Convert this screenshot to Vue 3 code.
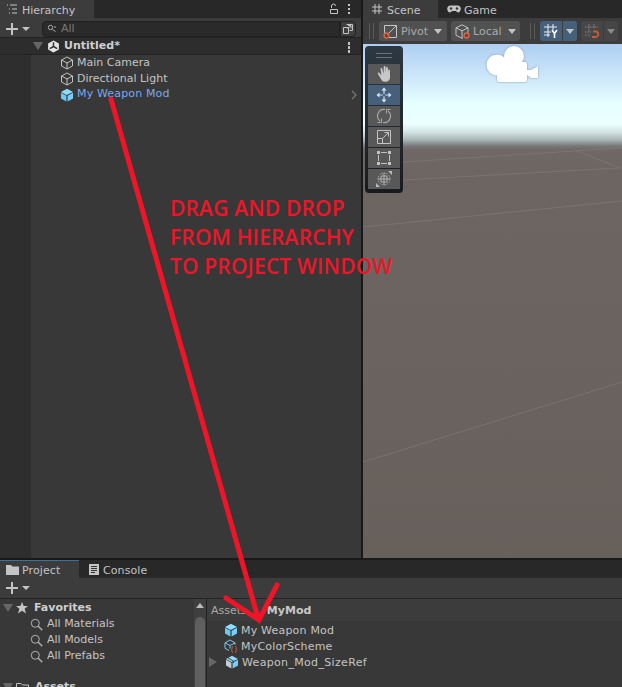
<script setup>
const tools = ['hand', 'move', 'rotate', 'scale', 'rect', 'all']
const hierarchy = [
  { label: 'Main Camera', kind: 'outline' },
  { label: 'Directional Light', kind: 'outline' },
  { label: 'My Weapon Mod', kind: 'prefab', active: true }
]
const favorites = ['All Materials', 'All Models', 'All Prefabs']
</script>

<template>
  <div class="app">
    <section class="hier">
      <div class="tabs">
        <div class="tab tab-h">
          <svg width="12" height="12" viewBox="0 0 12 12" class="tabicon"><path d="M1 2h1M4 2h7M3 6h1M6 6h5M3 10h1M6 10h5" stroke="#c4c4c4" fill="none"/></svg>
          <span>Hierarchy</span>
        </div>
        <div class="tabend">
          <svg width="10" height="12" viewBox="0 0 10 12"><path d="M2.500 5V3a2 2 0 0 1 4 0M1.500 6.500h7v4h-7z" stroke="#c4c4c4" fill="none"/></svg>
          <span class="dots"><i></i><i></i><i></i></span>
        </div>
      </div>
      <div class="bar hbar">
        <svg width="12" height="12" viewBox="0 0 12 12"><path d="M6 0v12M0 6h12" stroke="#c4c4c4" stroke-width="2"/></svg>
        <span class="caret small"></span>
        <div class="search">
          <svg width="10" height="10" viewBox="0 0 10 10"><circle cx="3.500" cy="3.500" r="2.200" stroke="#aaa" fill="none"/><path d="M5.500 5.500l3 2M7 3h2" stroke="#aaa" fill="none"/></svg>
          <span>All</span>
        </div>
        <div class="searchbtn">
          <svg width="12" height="12" viewBox="0 0 12 12"><path d="M4.500 1.500h6v6h-3M1.500 4.500h5v6h-5zM6 2.500h3v3M8.500 3l-3 3" stroke="#c4c4c4" fill="none"/></svg>
        </div>
      </div>
      <div class="hbody">
        <div class="scene-row">
          <span class="tri down"></span>
          <svg width="13" height="13" viewBox="0 0 14 14" class="unity"><path d="M7 .5l5.800 3.300v6.400L7 13.500 1.200 10.200V3.800z" fill="#e6e6e6"/><path d="M7 7V2.500M7 7l-4 2.300M7 7l4 2.300" stroke="#333" stroke-width="1.600"/></svg>
          <b>Untitled*</b>
          <span class="dots right"><i></i><i></i><i></i></span>
        </div>
        <div v-for="r in hierarchy" :key="r.label" class="hrow" :class="{ active: r.active }">
          <svg v-if="r.kind === 'outline'" width="14" height="14" viewBox="0 0 14 14"><path d="M7 1l5.500 3v6L7 13l-5.500-3V4zM1.500 4L7 7l5.500-3M7 7v6" stroke="#c4c4c4" fill="none"/></svg>
          <svg v-else width="14" height="14" viewBox="0 0 14 14"><path d="M7 .8L1 4l5.500 3L13 4z" fill="#8fdcff"/><path d="M1 4.800l5.400 3V13.500L1 10.500z" fill="#6cc8f5"/><path d="M13 4.800l-5.400 3V13.500L13 10.500z" fill="#76cff8"/></svg>
          <span>{{ r.label }}</span>
          <svg v-if="r.active" class="chev" width="6" height="10" viewBox="0 0 6 10"><path d="M1 1l4 4-4 4" stroke="#777" stroke-width="1.300" fill="none"/></svg>
        </div>
      </div>
    </section>

    <section class="scene">
      <div class="tabs">
        <div class="tab tab-s">
          <svg width="10" height="10" viewBox="0 0 10 10"><path d="M3 0v10M7 0v10M0 3h10M0 7h10" stroke="#c4c4c4"/></svg>
          <span>Scene</span>
        </div>
        <div class="tab2">
          <svg width="14" height="9" viewBox="0 0 14 9"><path d="M3.500.5h7a3.200 3.200 0 0 1 3 4.500c-.5 2.500-2.500 3-3.500 2L9 6H5L4 7C3 8 1 7.500.5 5a3.200 3.200 0 0 1 3-4.500z" fill="#c4c4c4"/><circle cx="4" cy="3.500" r="1.200" fill="#333"/><circle cx="10" cy="3.500" r="1.200" fill="#333"/></svg>
          <span>Game</span>
        </div>
      </div>
      <div class="sbar">
        <span class="grip"></span>
        <div class="btn pivot">
          <svg width="15" height="15" viewBox="0 0 15 15"><path d="M1.500 9V1.500h12v12H6M4.500 10.500L13 2" stroke="#c4c4c4" fill="none"/><circle cx="3.500" cy="11.500" r="2.500" stroke="#e2653c" stroke-width="1.300" fill="none"/></svg>
          <span class="lbl">Pivot</span><span class="caret"></span>
        </div>
        <div class="btn local">
          <svg width="15" height="15" viewBox="0 0 15 15"><path d="M7 .8l6 3v5M8 13.800l-1 .5-6-3V3.800l6-3M1 3.800l6 3 6-3M7 6.800v7" stroke="#c4c4c4" fill="none"/><circle cx="11.500" cy="11.500" r="2.500" stroke="#e2653c" stroke-width="1.300" fill="none"/></svg>
          <span class="lbl">Local</span><span class="caret"></span>
        </div>
        <span class="grip g2"></span>
        <div class="seg blue first">
          <svg width="15" height="14" viewBox="0 0 15 14"><path d="M4 0v13M9 0v6M0 3h13M0 8h7M0 11h6" stroke="#eee"/><path d="M8 6l2.500 3.500L13 6M10.500 9.500V14" stroke="#fff" stroke-width="1.600" fill="none"/></svg>
        </div>
        <div class="seg blue second"><span class="caret"></span></div>
        <div class="seg grey first g3">
          <svg width="15" height="14" viewBox="0 0 15 14"><path d="M4 0v8M9 0v5M0 3h13M0 8h6M4 10v3M0 11h2" stroke="#888" stroke-dasharray="1.500 1"/><path d="M8 7.500h2.500a2 2 0 0 1 0 5.500H7" stroke="#c85a35" stroke-width="1.800" fill="none"/></svg>
        </div>
        <div class="seg grey second"><span class="caret dim"></span></div>
      </div>
      <div class="view">
        <svg class="grid" width="259" height="514" viewBox="0 0 259 514">
          <path d="M40 118L259 104M40 136L256 124M212 106L257 124M0 183L259 157M0 418L259 338" stroke="#7f7975" fill="none" opacity=".75"/>
        </svg>
        <svg class="cam" width="56" height="40" viewBox="0 0 56 40">
          <circle cx="29" cy="12" r="10" fill="#fff"/>
          <circle cx="12" cy="21" r="10.500" fill="#fff"/>
          <rect x="12" y="18" width="30" height="20" rx="2" fill="#fff"/>
          <path d="M42 26h4l7-4v12h-7l-4-3z" fill="#fff"/>
        </svg>
        <div class="tools">
          <div class="handle"><i></i><i></i></div>
          <div v-for="t in tools" :key="t" class="tool" :class="{ on: t === 'move' }">
            <svg width="16" height="16" viewBox="0 0 16 16">
              <path v-if="t === 'hand'" d="M2 8l3 5c.5 1.500 1.500 2.800 4 2.800 3.500 0 5-2 5-4.500V4.500a.9.900 0 0 0-1.800 0V8l-.4-6a.9.900 0 0 0-1.800 0V7.500L9.500.9a.9.900 0 0 0-1.800 0L7.600 8 6.200 2.500a.9.900 0 0 0-1.700.3L5.500 9.500 3.300 6.800C2.300 6 1.300 7 2 8z" fill="#c8c8c8"/>
              <template v-else-if="t === 'move'">
                <path d="M8 1.500v13M1.500 8h13" stroke="#d8e4ee" stroke-width="1.200"/>
                <path d="M8 .5l2.500 3h-5zM8 15.500l2.500-3h-5zM.5 8l3-2.500v5zM15.500 8l-3-2.500v5z" fill="#d8e4ee"/>
                <circle cx="8" cy="8" r="1.600" fill="#4a6b8f"/>
              </template>
              <template v-else-if="t === 'rotate'">
                <path d="M9 1.500A6.500 6.500 0 0 0 4 13M7 14.500A6.500 6.500 0 0 0 12 3" stroke="#a8a8a8" stroke-width="1.200" fill="none"/>
                <path d="M1.500 14.500H5.500V10.500M14.500 1.500H10.500V5.500" stroke="#a8a8a8" fill="none"/>
              </template>
              <template v-else-if="t === 'scale'">
                <path d="M1.500 1.500h13v13h-13zM1.500 9.500h5v5M7 9l5.500-5.500M8.500 3.500h4v4" stroke="#c4c4c4" fill="none"/>
              </template>
              <template v-else-if="t === 'rect'">
                <path d="M1 1h3v3H1zM12 1h3v3h-3zM1 12h3v3H1zM12 12h3v3h-3z" fill="#c4c4c4"/>
                <path d="M5 2.500h6M5 13.500h6M2.500 5v6M13.500 5v6" stroke="#c4c4c4"/>
              </template>
              <template v-else>
                <circle cx="8" cy="8" r="6" stroke="#aaa" stroke-dasharray="1.500 1" fill="none"/>
                <path d="M8 2v12M2 8h12M5 5h6v6H5z" stroke="#bbb" stroke-width=".9" fill="none"/>
                <path d="M12 0h4v4zM0 16v-4l4 4z" fill="#bbb"/>
              </template>
            </svg>
          </div>
        </div>
      </div>
    </section>

    <section class="proj">
      <div class="tabs ptabs">
        <div class="tab tab-p">
          <svg width="13" height="11" viewBox="0 0 13 11"><path d="M0 1h5l1.500 1.500H13V11H0z" fill="#c4c4c4"/></svg>
          <span>Project</span>
        </div>
        <div class="tab2 cons">
          <svg width="10" height="11" viewBox="0 0 10 11"><path d="M0 0h10v11H0z" fill="#c4c4c4"/><path d="M2 2.500h6M2 4.500h6M2 6.500h6M2 8.500h4" stroke="#333"/></svg>
          <span>Console</span>
        </div>
      </div>
      <div class="bar pbar">
        <svg width="12" height="12" viewBox="0 0 12 12"><path d="M6 0v12M0 6h12" stroke="#c4c4c4" stroke-width="2"/></svg>
        <span class="caret small"></span>
      </div>
      <div class="pbody">
        <aside class="side">
          <div class="tree">
            <div class="fav">
              <span class="tri down"></span>
              <svg width="12" height="12" viewBox="0 0 12 12"><path d="M6 0l1.700 4H12L8.600 6.800 10 11.500 6 8.800 2 11.500 3.400 6.800 0 4h4.300z" fill="#c4c4c4"/></svg>
              <b>Favorites</b>
            </div>
            <div v-for="f in favorites" :key="f" class="favitem">
              <svg width="13" height="13" viewBox="0 0 13 13"><circle cx="5.300" cy="5.300" r="4" stroke="#b4b4b4" fill="none"/><path d="M8.300 8.300l4 4" stroke="#b4b4b4" stroke-width="1.300"/></svg>
              <span>{{ f }}</span>
            </div>
            <div class="fav assets">
              <span class="tri down"></span>
              <svg width="13" height="11" viewBox="0 0 13 11"><path d="M.5 10V1.500h4.500l1.500 1.500h6v7z" stroke="#c4c4c4" fill="none"/></svg>
              <b>Assets</b>
            </div>
          </div>
          <div class="scroll"><span class="up"></span><span class="thumb"></span></div>
        </aside>
        <div class="files">
          <div class="crumb"><span>Assets</span><b>MyMod</b></div>
          <div class="frow">
            <svg width="14" height="14" viewBox="0 0 14 14"><path d="M7 .8L1 4l5.500 3L13 4z" fill="#8fdcff"/><path d="M1 4.800l5.400 3V13.500L1 10.500z" fill="#6cc8f5"/><path d="M13 4.800l-5.400 3V13.500L13 10.500z" fill="#76cff8"/></svg>
            <span>My Weapon Mod</span>
          </div>
          <div class="frow">
            <svg width="14" height="14" viewBox="0 0 14 14"><path d="M6 1l5 2.800v2M6 1L1 3.800v5.500l4 2.200M1 3.800l5 2.700 5-2.700M6 6.500v3" stroke="#7cc9ee" fill="none"/><path d="M9 7.500c-1 0-1 .5-1 1.500v.8l-.7.700.7.700v.8c0 1 0 1.500 1 1.500M11 7.500c1 0 1 .5 1 1.500v.8l.7.700-.7.700v.8c0 1 0 1.500-1 1.500" stroke="#e2653c" fill="none"/></svg>
            <span>MyColorScheme</span>
          </div>
          <div class="frow exp">
            <span class="tri rt"></span>
            <svg width="14" height="14" viewBox="0 0 14 14"><path d="M7 .8L1 4l5.500 3L13 4z" fill="#8fdcff"/><path d="M1 4.800l5.400 3V13.500L1 10.500z" fill="#c9cdd0"/><path d="M13 4.800l-5.400 3V13.500L13 10.500z" fill="#76cff8"/><path d="M3 3l5.500 3v2" stroke="#444" fill="none"/></svg>
            <span>Weapon_Mod_SizeRef</span>
          </div>
        </div>
      </div>
    </section>

    <div class="note">DRAG AND DROP<br>FROM HIERARCHY<br>TO PROJECT WINDOW</div>
    <svg class="arrow" width="622" height="687" viewBox="0 0 622 687">
      <path d="M111 99L258 618M226 598L259 620L277 585" stroke="#ee1528" stroke-width="5" stroke-linecap="round" stroke-linejoin="miter" fill="none"/>
    </svg>
  </div>
</template>

<style>
html, body { margin: 0; background: #1a1a1a; }
</style>

<style scoped>
.app {
  position: relative;
  width: 622px;
  height: 687px;
  overflow: hidden;
  display: grid;
  grid-template-columns: 361px 259px;
  grid-template-rows: 558px 129px;
  column-gap: 2px;
  background: #191919;
  font: 11px/14px "DejaVu Sans", sans-serif;
  color: #c4c4c4;
}
svg { display: block; flex: none; }
.tabs { display: flex; height: 18px; background: #282828; align-items: stretch; }
.tab { display: flex; align-items: center; background: #3c3c3c; box-sizing: border-box; }
.tab span, .tab2 span { position: relative; top: 2px; }
.tab-h { width: 94px; padding-left: 6px; gap: 4px; }
.tabend { margin-left: auto; display: flex; align-items: center; gap: 9px; padding-right: 11px; }
.dots { display: flex; flex-direction: column; gap: 1.500px; }
.dots i { width: 2.500px; height: 2.500px; background: #c4c4c4; display: block; }
.bar { background: #3c3c3c; display: flex; align-items: center; box-sizing: border-box; }
.hbar { height: 20px; padding: 2px 0 0 6px; border-bottom: 1px solid #232323; }
.caret { width: 0; height: 0; border-left: 4.500px solid transparent; border-right: 4.500px solid transparent; border-top: 5px solid #c4c4c4; }
.caret.small { border-left-width: 4px; border-right-width: 4px; border-top-width: 4px; margin-left: 4px; }
.caret.dim { border-top-color: #8a8a8a; }
.search {
  margin-left: 12px; width: 298px; height: 16px; box-sizing: border-box;
  background: #2a2a2a; border: 1px solid #202020; border-radius: 4px 0 0 4px;
  display: flex; align-items: center; gap: 4px; padding-left: 4px; color: #777;
}
.searchbtn { width: 16px; height: 16px; display: flex; align-items: center; justify-content: center; background: #3f3f3f; border: 1px solid #222; box-sizing: border-box; border-radius: 0 4px 4px 0; }
.hbody { height: 520px; background: linear-gradient(90deg, #2e2e2e 31px, #383838 31px); }
.scene-row { height: 16px; background: #2d2d2d; border-bottom: 1px solid #232323; display: flex; align-items: center; position: relative; padding-left: 33px; color: #cfcfcf; }
.scene-row b { margin-left: 4px; }
.tri { width: 0; height: 0; display: block; flex: none; }
.tri.down { border-left: 5px solid transparent; border-right: 5px solid transparent; border-top: 8px solid #666; }
.tri.rt { border-top: 5px solid transparent; border-bottom: 5px solid transparent; border-left: 8px solid #666; }
.scene-row .tri { margin-right: 4px; }
.right { position: absolute; right: 11px; top: 4px; }
.hrow { height: 16px; display: flex; align-items: center; gap: 3px; padding-left: 60px; position: relative; }
.hrow.active { color: #7aa9f0; letter-spacing: .15px; }
.hrow.active span { position: relative; top: -1px; }
.chev { position: absolute; right: 4px; top: 3px; }

.scene { display: flex; flex-direction: column; }
.tab-s { width: 75px; padding-left: 9px; gap: 5px; }
.tab2 { display: flex; align-items: center; gap: 3px; padding-left: 9px; }
.sbar { height: 26px; background: #3c3c3c; display: flex; align-items: center; padding-left: 6px; box-sizing: border-box; }
.grip { width: 3px; height: 16px; border-left: 1px solid #5a5a5a; border-right: 1px solid #5a5a5a; flex: none; }
.btn { height: 20px; background: #515151; border-radius: 3px; display: flex; align-items: center; gap: 3px; padding-left: 4px; box-sizing: border-box; color: #aaa; flex: none; }
.lbl { position: relative; top: 1px; }
.pivot { width: 68px; margin-left: 5px; }
.local { width: 69px; margin-left: 4px; }
.btn .caret { margin-left: 3px; }
.g2 { margin-left: 10px; }
.seg { height: 20px; display: flex; align-items: center; justify-content: center; box-sizing: border-box; flex: none; }
.seg.blue { background: #46607c; }
.seg.grey { background: #464646; }
.seg.first { width: 22px; border-radius: 3px 0 0 3px; margin-left: 5px; }
.seg.second { width: 14px; border-radius: 0 3px 3px 0; margin-left: 1px; }
.g3.seg.first { margin-left: 4px; }
.view {
  flex: 1; position: relative; overflow: hidden;
  background: linear-gradient(180deg, #aecff2 0, #cfe8fb 35px, #e6ffff 60px, #ecffff 80px, #d4e4e4 88px, #a8b4b4 96px, #78777a 102px, #6f6866 106px, #6c6561 130px, #67605b 514px);
}
.grid { position: absolute; left: 0; top: 0; }
.cam { position: absolute; left: 122px; top: 0; filter: drop-shadow(0 0 1px #7f98aa); }
.tools {
  position: absolute; left: 2px; top: 2px; width: 38px; height: 147px;
  background: linear-gradient(180deg, #2d3842, #181b1e); border-radius: 4px;
  box-sizing: border-box; padding: 0 3px; display: flex; flex-direction: column;
}
.handle { height: 18px; display: flex; flex-direction: column; gap: 3px; align-items: center; justify-content: center; flex: none; }
.handle i { width: 16px; height: 1px; background: #6a7278; display: block; }
.tool { height: 20px; margin-bottom: 1px; background: #585858; display: flex; align-items: center; justify-content: center; flex: none; }
.tool.on { background: #46607c; }

.proj { grid-column: 1 / 3; display: flex; flex-direction: column; position: relative; }
.ptabs { height: 18px; margin-top: 2px; flex: none; }
.tab-p { width: 79px; padding-left: 6px; gap: 3px; border-top: 1px solid #3f6f9f; }
.tab-p span { letter-spacing: .1px; top: 1px; }
.cons { padding-left: 10px; gap: 4px; }
.cons span { letter-spacing: .1px; }
.pbar { height: 21px; padding-left: 6px; border-bottom: 1px solid #232323; flex: none; }
.pbody { display: flex; height: 88px; background: #383838; overflow: hidden; }
.side { width: 206px; display: flex; border-right: 1px solid #232323; flex: none; }
.tree { flex: 1; overflow: hidden; padding-top: 1px; }
.fav { height: 16px; display: flex; align-items: center; padding-left: 3px; gap: 3px; }
.fav b { margin-left: 3px; color: #cfcfcf; }
.assets { margin-top: 15px; }
.favitem { height: 16px; display: flex; align-items: center; gap: 4px; padding-left: 30px; }
.scroll { width: 12px; background: #3f3f3f; position: relative; flex: none; }
.scroll .up { position: absolute; left: 2px; top: 4px; width: 0; height: 0; border-left: 4px solid transparent; border-right: 4px solid transparent; border-bottom: 5px solid #bbb; }
.scroll .thumb { position: absolute; left: 1px; top: 18px; bottom: 0; width: 10px; background: #5f5f5f; border-radius: 5px 5px 0 0; }
.files { flex: 1; }
.crumb { height: 22px; background: #3c3c3c; display: flex; align-items: center; padding: 1px 0 0 4px; box-sizing: border-box; gap: 20px; margin-bottom: 1px; }
.crumb span { color: #a8a8a8; }
.crumb b { color: #c8c8c8; }
.frow { height: 16px; display: flex; align-items: center; gap: 3px; padding-left: 17px; letter-spacing: .2px; }
.frow > span:last-child { position: relative; top: 1px; }
.frow + .frow + .frow { letter-spacing: .33px; }
.exp { padding-left: 2px; }
.exp .tri { margin-right: 5px; }

.note {
  position: absolute; left: 170px; top: 194px;
  font: 600 21px/29px "Open Sans", sans-serif;
  letter-spacing: .15px;
  color: #ee1528;
  white-space: nowrap;
}
.arrow { position: absolute; left: 0; top: 0; pointer-events: none; }
</style>
